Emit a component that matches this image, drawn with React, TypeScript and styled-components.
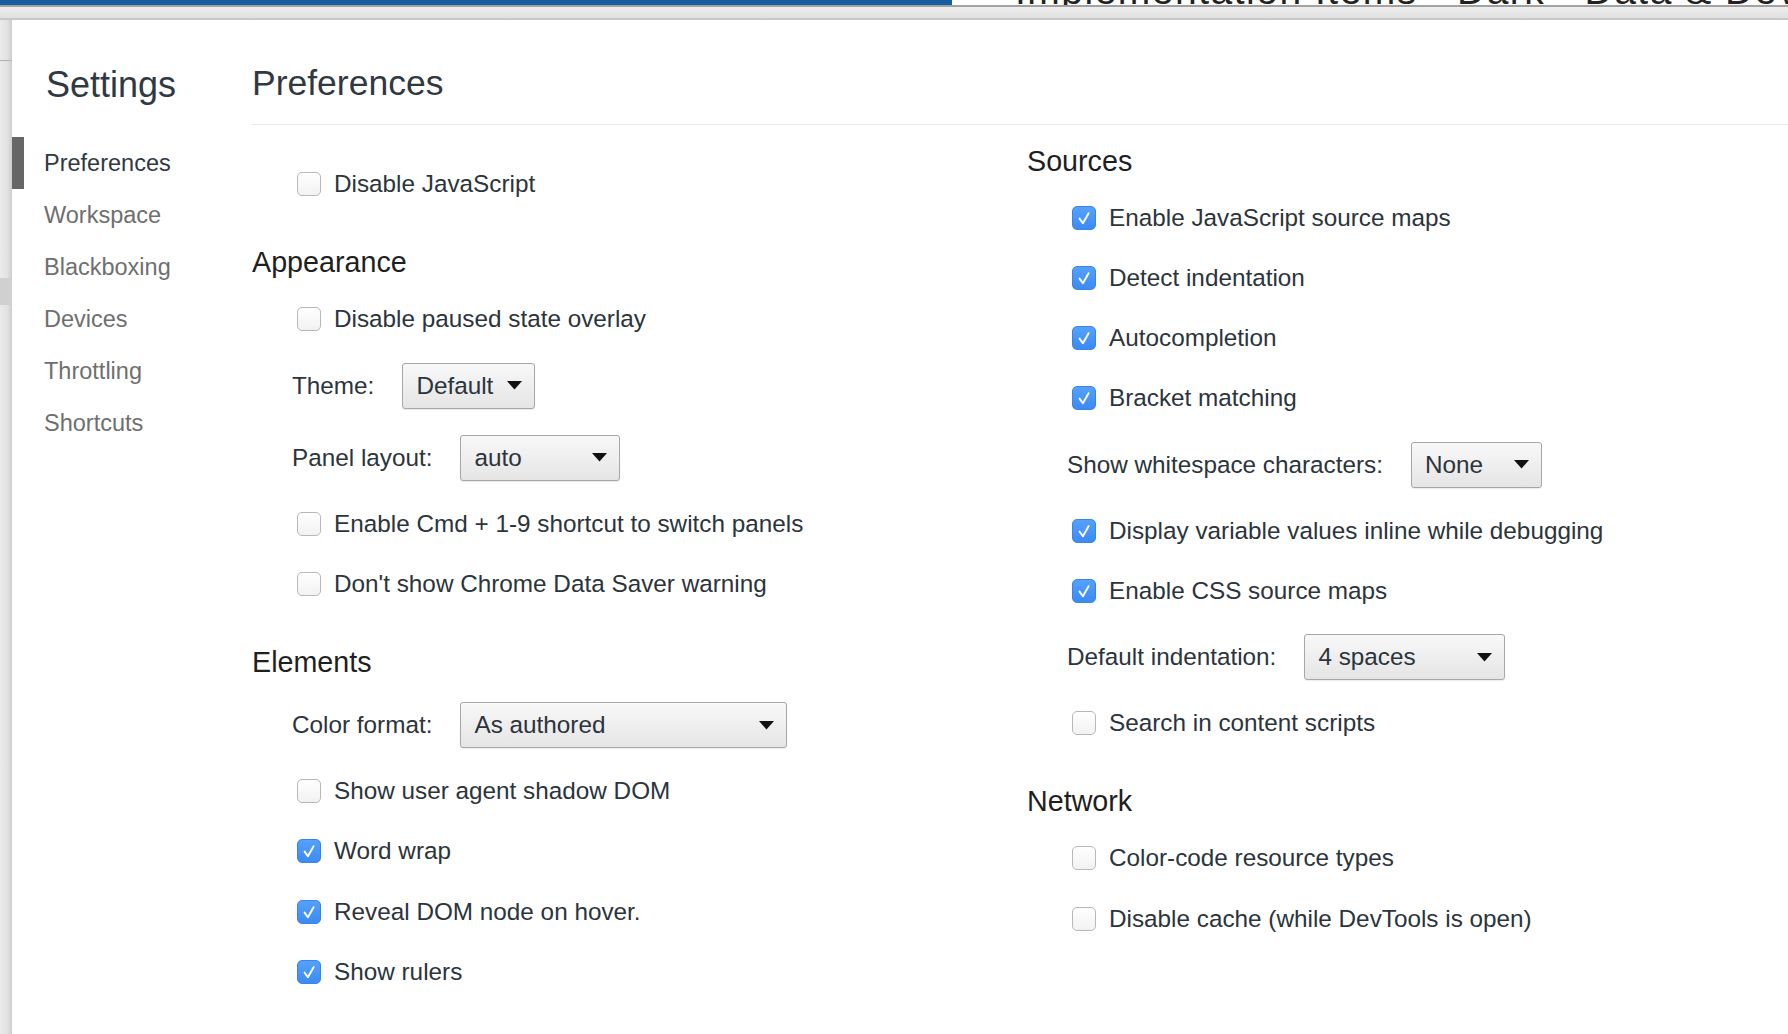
import React from 'react';
import styled, { createGlobalStyle } from 'styled-components';

const Global = createGlobalStyle`
  html, body { margin: 0; padding: 0; }
  body {
    width: 1788px;
    height: 1034px;
    overflow: hidden;
    background: #fff;
    font-family: "Liberation Sans", Arial, Helvetica, sans-serif;
  }
  #root { height: 100%; }
`;

const Page = styled.div`
  display: flex;
  flex-direction: column;
  height: 1034px;
`;

const BrowserTop = styled.div`
  display: flex;
  height: 5px;
  overflow: hidden;
  border-bottom: 2px solid #a2a2a2;
`;

const TabBlue = styled.div`
  width: 952px;
  background: #175da2;
`;

const TabTitle = styled.div`
  flex: 1;
  background: #fff;
  overflow: hidden;
  padding-left: 63px;
`;

const TabTitleText = styled.div`
  font-size: 39px;
  line-height: 39px;
  margin-top: -29px;
  color: #222;
  white-space: nowrap;
  letter-spacing: 1.5px;
`;

const Band = styled.div`
  height: 11px;
  background: linear-gradient(#eeeeee, #dfdfdf);
  border-bottom: 2px solid #c8c8c8;
`;

const Body = styled.div`
  flex: 1;
  display: flex;
  min-height: 0;
`;

const LeftStrip = styled.div`
  width: 12px;
  display: flex;
  flex-direction: column;
  background: linear-gradient(to right, #ebebeb, #e2e2e2 60%, #cdcdcd);
`;

const StripLine = styled.div`
  margin-top: 40px;
  height: 1px;
  background: #b3b3b3;
`;

const StripHandle = styled.div`
  margin-top: 217px;
  height: 27px;
  width: 10px;
  background: #d0d0d0;
`;

const Dialog = styled.div`
  flex: 1;
  display: flex;
  background: #fff;
`;

const Sidebar = styled.nav`
  width: 240px;
  display: flex;
  flex-direction: column;
`;

const SidebarTitle = styled.div`
  font-size: 36px;
  line-height: 42px;
  color: #303942;
  padding: 44px 0 31px 34px;
`;

const NavItem = styled.div<{ $active?: boolean }>`
  height: 52px;
  display: flex;
  align-items: center;
  box-sizing: border-box;
  border-left: 12px solid ${(p) => (p.$active ? '#666666' : 'transparent')};
  padding-left: 20px;
  font-size: 23.5px;
  color: ${(p) => (p.$active ? '#303942' : '#6f6f6f')};
`;

const Main = styled.main`
  flex: 1;
  display: flex;
  flex-direction: column;
`;

const Header = styled.header`
  padding: 42px 0 20px 0;
  border-bottom: 1px solid #e8e8e8;
`;

const HeaderTitle = styled.div`
  font-size: 35.5px;
  line-height: 42px;
  color: #303942;
`;

const Columns = styled.div`
  display: flex;
`;

const Column = styled.div<{ $w?: number; $pt?: number }>`
  display: flex;
  flex-direction: column;
  width: ${(p) => (p.$w ? `${p.$w}px` : 'auto')};
  flex: ${(p) => (p.$w ? 'none' : '1')};
  padding-top: ${(p) => p.$pt ?? 0}px;
`;

const SectionTitle = styled.div<{ $first?: boolean }>`
  font-size: 28.7px;
  line-height: 34px;
  color: #1f1f1f;
  padding-top: ${(p) => (p.$first ? 18.5 : 31)}px;
  padding-bottom: 10px;
`;

const CheckRow = styled.label`
  height: 60.25px;
  display: flex;
  align-items: center;
  gap: 13px;
  padding-left: 45px;
  font-size: 24.3px;
  color: #2c343c;
  white-space: nowrap;
`;

const Box = styled.span<{ $checked?: boolean }>`
  width: 24px;
  height: 24px;
  box-sizing: border-box;
  border-radius: 5px;
  display: flex;
  align-items: center;
  justify-content: center;
  flex: none;
  border: 1px solid ${(p) => (p.$checked ? '#3883ec' : '#b8b8b8')};
  background: ${(p) =>
    p.$checked
      ? 'linear-gradient(#55a1fa, #3c8af3)'
      : 'linear-gradient(#ffffff, #f2f2f2)'};
`;

const SelectRow = styled.div`
  height: 72px;
  display: flex;
  align-items: center;
  gap: 28px;
  padding-left: 40px;
  font-size: 24.3px;
  color: #2c343c;
  white-space: nowrap;
`;

const Select = styled.div<{ $w: number }>`
  width: ${(p) => p.$w}px;
  height: 46px;
  box-sizing: border-box;
  display: flex;
  align-items: center;
  justify-content: space-between;
  padding: 0 12px 0 13px;
  border: 1px solid #a7a7a7;
  border-radius: 3px;
  background: linear-gradient(#f8f8f8, #e5e5e5);
  box-shadow: 0 1px 1px rgba(0, 0, 0, 0.08);
  font-size: 24.3px;
  color: #2c343c;
`;

const Check = ({ checked }: { checked?: boolean }) => (
  <Box $checked={checked}>
    {checked && (
      <svg width="22" height="22" viewBox="0 0 22 22">
        <path
          d="M6.6 11.6 L9.9 16.2 L15.6 6.2"
          fill="none"
          stroke="#fff"
          strokeWidth="1.9"
          strokeLinecap="round"
          strokeLinejoin="round"
        />
      </svg>
    )}
  </Box>
);

const Arrow = () => (
  <svg width="15" height="9" viewBox="0 0 15 9">
    <polygon points="0,0 15,0 7.5,8.5" fill="#111" />
  </svg>
);

type Item =
  | { kind: 'title'; text: string; first?: boolean }
  | { kind: 'check'; text: string; checked?: boolean }
  | { kind: 'select'; label: string; value: string; width: number };

const leftItems: Item[] = [
  { kind: 'check', text: 'Disable JavaScript' },
  { kind: 'title', text: 'Appearance' },
  { kind: 'check', text: 'Disable paused state overlay' },
  { kind: 'select', label: 'Theme:', value: 'Default', width: 133 },
  { kind: 'select', label: 'Panel layout:', value: 'auto', width: 160 },
  { kind: 'check', text: 'Enable Cmd + 1-9 shortcut to switch panels' },
  { kind: 'check', text: "Don't show Chrome Data Saver warning" },
  { kind: 'title', text: 'Elements' },
  { kind: 'select', label: 'Color format:', value: 'As authored', width: 327 },
  { kind: 'check', text: 'Show user agent shadow DOM' },
  { kind: 'check', text: 'Word wrap', checked: true },
  { kind: 'check', text: 'Reveal DOM node on hover.', checked: true },
  { kind: 'check', text: 'Show rulers', checked: true },
];

const rightItems: Item[] = [
  { kind: 'title', text: 'Sources', first: true },
  { kind: 'check', text: 'Enable JavaScript source maps', checked: true },
  { kind: 'check', text: 'Detect indentation', checked: true },
  { kind: 'check', text: 'Autocompletion', checked: true },
  { kind: 'check', text: 'Bracket matching', checked: true },
  { kind: 'select', label: 'Show whitespace characters:', value: 'None', width: 131 },
  { kind: 'check', text: 'Display variable values inline while debugging', checked: true },
  { kind: 'check', text: 'Enable CSS source maps', checked: true },
  { kind: 'select', label: 'Default indentation:', value: '4 spaces', width: 201 },
  { kind: 'check', text: 'Search in content scripts' },
  { kind: 'title', text: 'Network' },
  { kind: 'check', text: 'Color-code resource types' },
  { kind: 'check', text: 'Disable cache (while DevTools is open)' },
];

const renderItem = (it: Item, i: number) => {
  if (it.kind === 'title')
    return (
      <SectionTitle key={i} $first={it.first}>
        {it.text}
      </SectionTitle>
    );
  if (it.kind === 'check')
    return (
      <CheckRow key={i}>
        <Check checked={it.checked} />
        {it.text}
      </CheckRow>
    );
  return (
    <SelectRow key={i}>
      {it.label}
      <Select $w={it.width}>
        <span>{it.value}</span>
        <Arrow />
      </Select>
    </SelectRow>
  );
};

const navItems = ['Preferences', 'Workspace', 'Blackboxing', 'Devices', 'Throttling', 'Shortcuts'];

export default function App() {
  return (
    <Page>
      <Global />
      <BrowserTop>
        <TabBlue />
        <TabTitle>
          <TabTitleText>Implementation Items - Dark - Data &amp; DevTools</TabTitleText>
        </TabTitle>
      </BrowserTop>
      <Band />
      <Body>
        <LeftStrip>
          <StripLine />
          <StripHandle />
        </LeftStrip>
        <Dialog>
          <Sidebar>
            <SidebarTitle>Settings</SidebarTitle>
            {navItems.map((n, i) => (
              <NavItem key={n} $active={i === 0}>
                {n}
              </NavItem>
            ))}
          </Sidebar>
          <Main>
            <Header>
              <HeaderTitle>Preferences</HeaderTitle>
            </Header>
            <Columns>
              <Column $w={775} $pt={29}>
                {leftItems.map(renderItem)}
              </Column>
              <Column>{rightItems.map(renderItem)}</Column>
            </Columns>
          </Main>
        </Dialog>
      </Body>
    </Page>
  );
}
